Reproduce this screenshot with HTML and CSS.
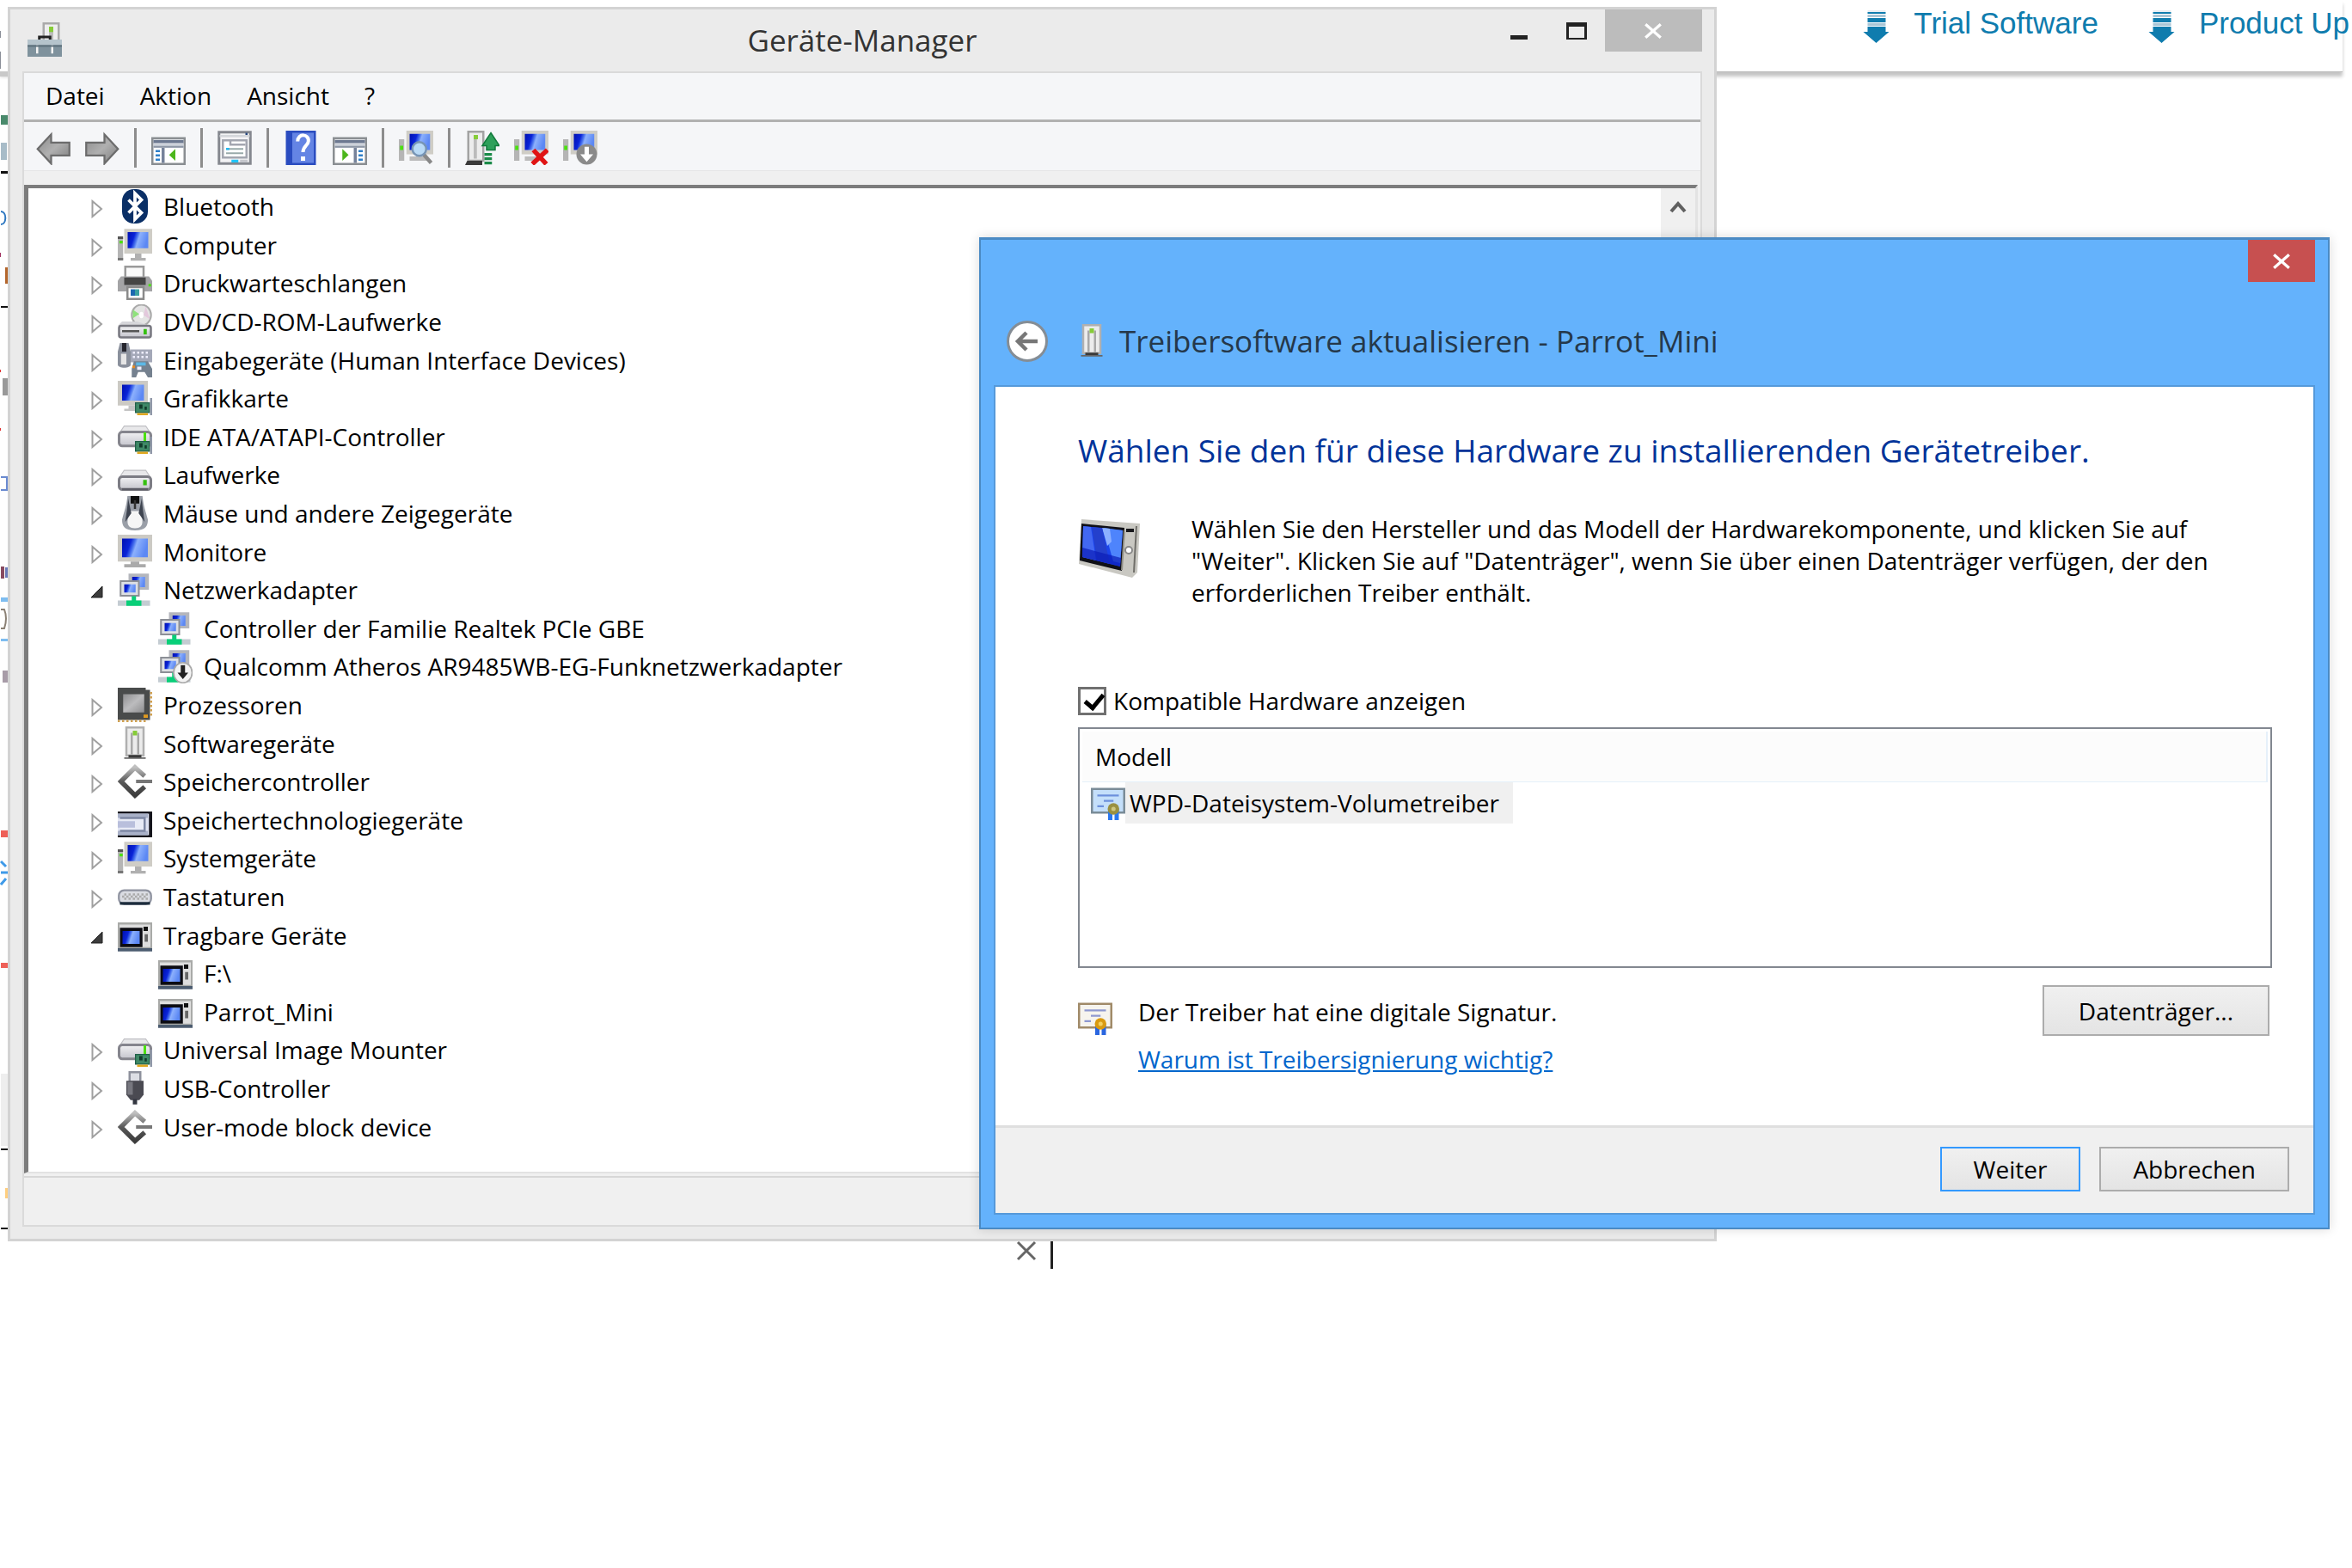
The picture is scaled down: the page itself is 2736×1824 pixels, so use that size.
FILE: index.html
```html
<!DOCTYPE html>
<html lang="de">
<head>
    <meta charset="UTF-8">
    <meta name="viewport" content="width=device-width, initial-scale=1.0">
    <title>Geräte-Manager</title>
    <link rel="stylesheet" href="styles.css">
</head>
<body>

    <!-- Shared icons -->
    <svg class="sprite" aria-hidden="true">
        <defs>
            <linearGradient id="g-screen" x1="0" y1="0" x2="1" y2=".25">
                <stop offset="0" stop-color="#0010b0"/><stop offset=".35" stop-color="#0a24d8"/>
                <stop offset=".5" stop-color="#4a74ee"/><stop offset=".6" stop-color="#8cb0fc"/><stop offset="1" stop-color="#5c88f4"/>
            </linearGradient>
            <linearGradient id="g-metal" x1="0" y1="0" x2="0" y2="1">
                <stop offset="0" stop-color="#f2f2f4"/><stop offset="1" stop-color="#c4c4cc"/>
            </linearGradient>
            <linearGradient id="g-arrow" x1="0" y1="0" x2="1" y2="1">
                <stop offset="0" stop-color="#8a8a8a"/><stop offset=".5" stop-color="#b0b0b0"/><stop offset="1" stop-color="#7c7c7c"/>
            </linearGradient>
            <linearGradient id="g-chip" x1="0" y1="0" x2="1" y2="1">
                <stop offset="0" stop-color="#8e8e90"/><stop offset=".5" stop-color="#bcbcbe"/><stop offset="1" stop-color="#8e8e90"/>
            </linearGradient>
            <linearGradient id="g-dark" x1="0" y1="0" x2="0" y2="1">
                <stop offset="0" stop-color="#c0c0c0"/><stop offset=".5" stop-color="#5a5a5a"/><stop offset="1" stop-color="#3c3c3c"/>
            </linearGradient>
        </defs>
        <symbol id="i-closed" viewBox="0 0 14 22"><path d="M1.500 2v18L12 11z" fill="#fff" stroke="#a0a0a0" stroke-width="2"/></symbol>
        <symbol id="i-open" viewBox="0 0 14 14"><path d="M13 0v13H0z" fill="#3c3c3c" stroke="#222"/></symbol>
        <symbol id="i-bluetooth" viewBox="0 0 16 16">
            <rect x="2" width="12" height="16" rx="5.500" fill="#0a2f66"/>
            <path d="M5 5l6 6-3 3V2l3 3-6 6" fill="none" stroke="#fff" stroke-width="1.500"/>
        </symbol>
        <symbol id="i-computer" viewBox="0 0 16 16">
            <path d="M0 5h2.500v10H0z" fill="#b5b5b5"/><path d="M0 4h2.500v1.200H0z" fill="#555"/><path d="M.8 6h1.500v1.300H.8z" fill="#4be010"/><path d="M0 14h2.500v1.200H0z" fill="#777"/>
            <path d="M3 .5h13v11.500H3z" fill="#cfcdc6"/><path d="M4.600 2h9.600v7.500H4.600z" fill="url(#g-screen)"/>
            <path d="M8 12h3v2h2v1.300H6V14h2z" fill="#b0b0b0"/>
        </symbol>
        <symbol id="i-monitor" viewBox="0 0 16 16">
            <path d="M0 0h16v12.500H0z" fill="#cccac4"/><path d="M2 1.800h12v8.700H2z" fill="url(#g-screen)"/>
            <path d="M6 12.500h4v1.200h3v1.500H3v-1.500h3z" fill="#aaa"/>
        </symbol>
        <symbol id="i-card" viewBox="0 0 16 16"><path d="M8 10h7v5H8z" fill="#206048"/><path d="M8.500 10.500h6v4h-6z" fill="#3f8866"/><path d="M10 11h1.500v2H10zM12.500 12h1v1.500h-1z" fill="#123a2a"/><path d="M9 15h5v1H9z" fill="#e0a820"/><path d="M15 8h1v8h-1z" fill="#9098a8"/></symbol>
        <symbol id="i-graphics" viewBox="0 0 16 16">
            <path d="M0 0h14v11.500H0z" fill="#cccac4"/><path d="M2 1.800h10.200v7.400H2z" fill="url(#g-screen)"/><path d="M5 11.500h4V14H3v-1h2z" fill="#c4c4c4"/>
            <use href="#i-card"/>
        </symbol>
        <symbol id="i-drive" viewBox="0 0 16 16">
            <path d="M3 6h10l2 3H1z" fill="#e8e8ea" stroke="#c0c0c4" stroke-width=".5"/>
            <rect x=".6" y="9" width="14.800" height="6" rx="1.500" fill="url(#g-metal)" stroke="#7c7c84" stroke-width="1.200"/><path d="M2 14.800h12" stroke="#5c5c66"/><path d="M11.800 10.500h1.700V13h-1.700z" fill="#35c010"/>
        </symbol>
        <symbol id="i-ide" viewBox="0 0 16 16">
            <path d="M3 3h10l2 3H1z" fill="#e8e8ea" stroke="#c0c0c4" stroke-width=".5"/><rect x=".6" y="5.800" width="14.800" height="6.500" rx="1.500" fill="url(#g-metal)" stroke="#85858d" stroke-width="1.200"/><path d="M12 6h1.200v4H12z" fill="#4be010"/>
            <use href="#i-card"/>
        </symbol>
        <symbol id="i-dvd" viewBox="0 0 16 16">
            <ellipse cx="11" cy="5" rx="4.500" ry="4.800" fill="#e4e4e4" stroke="#aaa" stroke-width=".8"/><path d="M7 2.500l3 2-3 2z" fill="#8fe27c"/><path d="M13 1l-1 4 3 2z" fill="#e3c8dc"/><ellipse cx="11" cy="5" rx="1" ry="1.500" fill="#fff"/>
            <path d="M2 8h7l6 2H0z" fill="#d6d6da"/><rect x=".6" y="10" width="14.800" height="5.400" rx="1" fill="url(#g-metal)" stroke="#77777f"/><path d="M2 12h8v1H2z" fill="#555"/><path d="M12 11.500h1.500V14H12z" fill="#35c010"/>
        </symbol>
        <symbol id="i-printer" viewBox="0 0 16 16">
            <path d="M3.500 .5h8.500V7H3.500z" fill="#fafafa" stroke="#9a9a9a"/><path d="M1.500 5h13l1.500 2v5H0V7z" fill="#a4a4a6"/><path d="M3 5.500h10V9H3z" fill="#454545"/>
            <path d="M14.300 8.500h1.200v1.200h-1.200z" fill="#4be010"/><path d="M4.500 10h7.500v5.500H4.500z" fill="#fff" stroke="#8a8a8a"/><path d="M6 11h2v3H6z" fill="#1c68b0"/><path d="M8 11h2v3H8z" fill="#3aa0a0"/>
        </symbol>
        <symbol id="i-hid" viewBox="0 0 16 16">
            <path d="M1 0h4l1 4v6c0 2-6 2-6 0V4z" fill="#8a909c"/><path d="M2 0h2v4H2z" fill="#26262e"/><path d="M1.500 5h2.500v5H1.500z" fill="#e6e6e6"/>
            <path d="M6 3h10v6H6z" fill="#a4a8b8"/><path d="M7 4.500h8M7 6.500h8" stroke="#eef" stroke-dasharray="1"/>
            <path d="M7.500 8.500h6.500l2 3.500v4h-2l-1.500-2.500H9.500L8.500 16H6.500v-4z" fill="#75818f"/><path d="M8.500 9h4.500v1.500H8.500z" fill="#5cb8e6"/><path d="M9 11h2v1.500H9z" fill="#eef"/><path d="M6.800 10.500h1.200v1.200H6.800z" fill="#e88a20"/>
        </symbol>
        <symbol id="i-mouse" viewBox="0 0 16 16">
            <path d="M4.500 0h7c.5 5 1.500 7 2.500 11 0 3-1 5-6 5s-6-2-6-5c1-4 2-6 2.500-11z" fill="#9a9fa8"/>
            <path d="M6 7h4c1.500 3 3 8-2 8s-3.500-5-2-8z" fill="#f6f6f6"/><path d="M4.800 1l1.500 7L3.500 12c.5-4 1-6 1.300-11zM11.200 1L9.700 8l2.800 4c-.5-4-1-6-1.300-11z" fill="#3e4450"/><path d="M6 0h4v3.500H6z" fill="#111"/><path d="M7.500 2h1v4h-1z" fill="#333"/>
        </symbol>
        <symbol id="i-network" viewBox="0 0 16 16">
            <path d="M5 .5h9.500V8H5z" fill="#b4b6bc"/><path d="M6.700 2h6v4.800h-6z" fill="url(#g-screen)"/>
            <path d="M1.300 4h8.500v6.800H1.300z" fill="#dddfe3" stroke="#8c8f96" stroke-width=".8"/><path d="M3 5.500h5.300v3.800H3z" fill="url(#g-screen)"/>
            <path d="M0 13h15v2.500H0z" fill="#c4ccd2"/><path d="M4 13h2.500v-2h2v2H11v2.500H4z" fill="#08cf78"/>
        </symbol>
        <symbol id="i-network-off" viewBox="0 0 16 16">
            <use href="#i-network"/><ellipse cx="11.500" cy="11" rx="4.300" ry="4.700" fill="#f4f4f4" stroke="#aaa" stroke-width=".7"/>
            <path d="M10.500 7.500h2V11H14l-2.500 3L9 11h1.500z" fill="#222"/>
        </symbol>
        <symbol id="i-cpu" viewBox="0 0 16 16">
            <path d="M0 0h13v1h2v14H0z" fill="#494b4b"/><path d="M2.500 3h9.800v8.500H2.500z" fill="url(#g-chip)"/>
            <path d="M0 15.500h14" stroke="#d0a050" stroke-dasharray="1"/><path d="M15.500 2v12" stroke="#d0a050" stroke-dasharray="1"/><path d="M12 12.500h2V14h-2z" fill="#e09a20"/>
        </symbol>
        <symbol id="i-device" viewBox="0 0 16 16">
            <path d="M4 .5h8v13H4z" fill="#ececec" stroke="#b0b0b0"/><path d="M6 3h4v10H6z" fill="#a8a8a8"/><path d="M7 3h2v10H7z" fill="#ececec"/>
            <path d="M7 2h2v2.200H7z" fill="#86cc38"/><path d="M5 13.300h6v1.200H5z" fill="#3a3a3a"/><path d="M3 14.400h10v.7H3z" fill="#666"/>
        </symbol>
        <symbol id="i-diamond" viewBox="0 0 16 16">
            <path d="M12.500 5.500L8 1.500 1.500 8 8 14.500l4.500-4" fill="none" stroke="url(#g-dark)" stroke-width="2.200"/><path d="M8.500 7.200H16v1.600H8.500z" fill="#777"/>
        </symbol>
        <symbol id="i-storage" viewBox="0 0 16 16">
            <path d="M0 4h16v12H0z" fill="#15151c"/><path d="M0 5h14.500v10H0z" fill="#dfe3f2"/><path d="M0 5h14v2H0zM0 13h14v2H0z" fill="#a9b1c8"/><path d="M1 7h11.500v6H1" fill="#e8ebf6" stroke="#7e88a4"/><path d="M0 8.500h8v3H0z" fill="#b9bfdc"/>
        </symbol>
        <symbol id="i-keyboard" viewBox="0 0 16 16">
            <rect x=".5" y="5" width="15" height="6.500" rx="2.500" fill="#dadce2" stroke="#8f93a0" stroke-width=".9"/><path d="M3 7h11M2 8h11M3 9h11" stroke="#aaa" stroke-dasharray="1"/><path d="M1 10.500h14v1.300H1z" fill="#1c2c3c"/>
        </symbol>
        <symbol id="i-portable" viewBox="0 0 16 16">
            <path d="M0 2h16v13H0z" fill="#a9aaa8"/><path d="M.8 3h14.400v10.500H.8z" fill="#dedede"/><path d="M1 4.500h10.500v9H1z" fill="#0c0c12"/><path d="M2.200 6h8v6h-8z" fill="url(#g-screen)"/>
            <path d="M12 4h2v2h-2z" fill="#111"/><path d="M12.500 7.500h1.500v3.500h-1.500z" fill="#666"/><path d="M0 14h16v1.500H0z" fill="#4c5c70"/>
        </symbol>
        <symbol id="i-usb" viewBox="0 0 16 16">
            <path d="M5.500 .5h5V5h-5z" fill="#dcdee4" stroke="#8e919c"/><path d="M4 4.500h8V11l-2 2.500H6L4 11z" fill="#4a4a52"/><path d="M4.500 5h2.500v6H4.500z" fill="#77777f"/><path d="M7 13h2v2.500H7z" fill="#333640"/>
        </symbol>
        <symbol id="i-cert" viewBox="0 0 16 16">
            <path d="M.5 1.500h15v11H.5z" fill="#f6f4ee" stroke="#a08a68"/><path d="M3 4.500h10M6 7h4.500M3 9.500h3" stroke="#8e98d0" stroke-width=".9"/>
            <path d="M8 11h2v5H8zM11 11h2v5h-2z" fill="#2a66e0"/><circle cx="10.500" cy="10.800" r="2.700" fill="#d99a10"/><circle cx="10.500" cy="10.800" r="1" fill="#f4d060"/>
        </symbol>
        <symbol id="i-cert-blue" viewBox="0 0 16 16">
            <path d="M.5 1.500h15v11H.5z" fill="#c4dffa" stroke="#7a8c98"/><path d="M3 4.500h10M6 7h4.500M3 9.500h3" stroke="#6c90dc" stroke-width=".9"/>
            <path d="M8 11h2v5H8zM11 11h2v5h-2z" fill="#2a78f0"/><circle cx="10.500" cy="10.800" r="2.700" fill="#9a9040"/><circle cx="10.500" cy="10.800" r="1" fill="#cfc780"/>
        </symbol>
        <symbol id="i-close" viewBox="0 0 20 16"><path d="M2 1l16 14M18 1L2 15" fill="none" stroke="currentColor" stroke-width="3"/></symbol>
        <symbol id="i-download" viewBox="0 0 30 38">
            <path d="M5 0h21v2H5z" fill="#e6edf2"/><path d="M5 2h21v2H5zM5 9h21v5H5z" fill="#0f7cae"/><path d="M5 5h21v3H5zM5 15h21v3H5z" fill="#a9c6d6"/>
            <path d="M5 19h21v6h4L15 38 0 25h5z" fill="#0f7cae"/>
        </symbol>
    </svg>

    <!-- Web page behind the windows -->
    <header class="site-bar">
        <a class="site-link" href="#"><svg class="site-icon"><use href="#i-download"/></svg>Trial Software</a>
        <a class="site-link" href="#"><svg class="site-icon"><use href="#i-download"/></svg>Product Up</a>
    </header>
    <svg class="page-edge" viewBox="0 0 9 1500" aria-hidden="true">
        <path d="M0 36h1v8H0zM0 60h1v20H0z" fill="#8a8f98"/>
        <path d="M0 83h9v6H0z" fill="#c9c9c9"/><path d="M1 134h8v11H1z" fill="#4a8a6c"/><path d="M1 166h7v20H1z" fill="#a8bcc8"/>
        <path d="M1 199h8v3H1zM1 356h8v2H1zM1 1336h8v2H1zM1 1428h8v2H1z" fill="#111"/>
        <path d="M1 246c7 0 7 15 0 15" fill="none" stroke="#2c76c0" stroke-width="2"/>
        <path d="M6 311h3v19H6z" fill="#b4662c"/><path d="M0 294h1v5H0z" fill="#a03060"/><path d="M0 430h1v3H0zM0 498h1v3H0z" fill="#e03030"/>
        <path d="M3 440h6v20H3z" fill="#999"/><path d="M1 555h7v15H1" fill="none" stroke="#6a8ad0" stroke-width="2"/>
        <path d="M1 659h4v14H1z" fill="#884a60"/><path d="M6 660h3v12H6z" fill="#6a7ab8"/><path d="M1 695h8v5H1zM1 743h8v3H1z" fill="#7ebdf0"/>
        <path d="M1 709h4q4 10 0 22H1" fill="none" stroke="#8a8074" stroke-width="2"/><path d="M3 780h6v14H3z" fill="#a89ca8"/>
        <path d="M1 966h8v8H1zM1 1120h8v6H1z" fill="#ee6058"/>
        <path d="M1 1002l6 6M1 1015h8M1 1029l6-7" stroke="#3f9ae8" stroke-width="3"/>
        <path d="M1 1249h8v84H1z" fill="#eee"/><path d="M6 1382h3v12H6z" fill="#ffcf80"/>
    </svg>
    <div class="tab-rest">
        <svg class="tab-close" viewBox="0 0 24 24"><path d="M2 1l20 20M22 1L2 21" stroke="#666" stroke-width="3"/></svg>
        <span class="caret"></span>
    </div>

    <!-- Device manager -->
    <main class="window manager">
        <div class="titlebar">
            <svg class="icon title-icon" viewBox="0 0 16 16">
                <path d="M7.500.5h7V10h-7z" fill="#eee" stroke="#aaa"/><path d="M10 3h2v6h-2z" fill="#bbb"/><path d="M10 2h2v2.500h-2z" fill="#86cc38"/>
                <path d="M5.500 8V6.800h5V8" fill="none" stroke="#222" stroke-width="1.200"/><path d="M0 8h16v8H0z" fill="#7f929d"/><path d="M0 8h16v2.500H0z" fill="#b5c4cc"/>
                <path d="M4.500 10.500v4M11.500 10.500v4" stroke="#f4f4f4"/><path d="M0 11h16" stroke="#5e717c" stroke-width=".8"/>
            </svg>
            <h1 class="title">Geräte-Manager</h1>
            <div class="controls">
                <button class="control" aria-label="Minimieren"><svg class="glyph" viewBox="0 0 24 20"><path d="M1 15h20v5H1z" fill="#222"/></svg></button>
                <button class="control" aria-label="Maximieren"><svg class="glyph" viewBox="0 0 24 20"><path d="M0 0h24v20H0zM3 5v13h18V5z" fill="#222" fill-rule="evenodd"/></svg></button>
                <button class="control close" aria-label="Schließen"><svg class="glyph-x"><use href="#i-close"/></svg></button>
            </div>
        </div>
        <div class="frame">
            <nav class="menubar">
                <button class="menu">Datei</button>
                <button class="menu">Aktion</button>
                <button class="menu">Ansicht</button>
                <button class="menu">?</button>
            </nav>
            <div class="toolbar">
                <button class="tool" aria-label="Zurück"><svg class="icon" viewBox="0 0 16 16"><path d="M.7 8.500L7 1.700V5.500h8.500v6H7v3.800z" fill="url(#g-arrow)" stroke="#6c6c6c" stroke-width=".9"/></svg></button>
                <button class="tool" aria-label="Vorwärts"><svg class="icon" viewBox="0 0 16 16"><path d="M15.300 8.500L9 1.700V5.500H.5v6H9v3.800z" fill="url(#g-arrow)" stroke="#6c6c6c" stroke-width=".9"/></svg></button>
                <span class="sep"></span>
                <button class="tool" aria-label="Konsolenstruktur"><svg class="icon" viewBox="0 0 16 16"><path d="M.5 3.500h15v12H.5z" fill="#fff" stroke="#8a8e92"/><path d="M1 4.300h14v1.500H1z" fill="#6c7890"/><path d="M1 6h14v2H1z" fill="#cdd2da"/><path d="M1 7.500h14" stroke="#8d96a6" stroke-width=".8"/><path d="M5.500 8v7" stroke="#76829a" stroke-width="1.400"/><path d="M2 9.500h2M2 11.500h2M2 13.500h2" stroke="#2f7fc8"/><path d="M11.200 8.500v5.500L8.300 11.300z" fill="#4cb61c"/></svg></button>
                <span class="sep"></span>
                <button class="tool" aria-label="Eigenschaften"><svg class="icon" viewBox="0 0 16 16"><path d="M.7.7h14.600v14.600H.7z" fill="#f3f3f5" stroke="#85888f" stroke-width="1.200"/><path d="M1 2h14v1H1z" fill="#d4d6da"/><path d="M13 1h1v1h-1z" fill="#2a4a80"/><path d="M2.500 4.500h11v8h-11z" fill="#fff" stroke="#a3a6b0"/><path d="M6 4.500v2h7" fill="none" stroke="#a3a6b0"/><path d="M4 8.500h8M4 10.500h8" stroke="#9aa" stroke-width=".8"/><path d="M4 8.500h1.500" stroke="#20b8f0"/><path d="M6.500 13.500h3.200v1.300H6.500z" fill="#20c4f8"/><path d="M10.500 13.500h3.500v1.300h-3.500z" fill="#c4c6cc"/></svg></button>
                <span class="sep"></span>
                <button class="tool" aria-label="Hilfe"><svg class="icon" viewBox="0 0 16 16"><path d="M1 0h14v16H1z" fill="#2a4cc0"/><path d="M4 1h10v14H4z" fill="#6484e4"/><path d="M6.500 5c0-4 5.500-3.600 5 0-.3 2-2.500 2.200-2.500 5" fill="none" stroke="#fff" stroke-width="1.600"/><path d="M8 12h2v2H8z" fill="#fff"/></svg></button>
                <button class="tool" aria-label="Aktionsbereich"><svg class="icon" viewBox="0 0 16 16"><path d="M.5 3.500h15v12H.5z" fill="#fff" stroke="#8a8e92"/><path d="M1 4.300h14v1.500H1z" fill="#6c7890"/><path d="M1 6h14v2H1z" fill="#cdd2da"/><path d="M1 7.500h14" stroke="#8d96a6" stroke-width=".8"/><path d="M10.500 8v7" stroke="#76829a" stroke-width="1.400"/><path d="M12 9.500h2M12 11.500h2M12 13.500h2" stroke="#2f7fc8"/><path d="M4.500 8.500v5.500l2.900-2.700z" fill="#4cb61c"/></svg></button>
                <span class="sep"></span>
                <button class="tool" aria-label="Nach geänderter Hardware suchen"><svg class="icon" viewBox="0 0 16 16"><path d="M0 4h2.500v10H0z" fill="#b5b5b5"/><path d="M.5 7H2v2H.5z" fill="#4be010"/><path d="M3.500 0H16v11H3.500z" fill="#cfcdc6"/><path d="M5 1.500h9.500V9H5z" fill="url(#g-screen)"/><path d="M5 12h8v2H5z" fill="#bbb"/><path d="M11.500 11l3.500 4" stroke="#888" stroke-width="1.800"/><circle cx="9.500" cy="8.500" r="3.200" fill="#b9daf6" stroke="#7795b5"/></svg></button>
                <span class="sep"></span>
                <button class="tool" aria-label="Treiber aktualisieren"><svg class="icon" viewBox="0 0 16 16"><path d="M1.500.5h7V14h-7z" fill="#ececec" stroke="#a3a3a3"/><path d="M4 3h1.500v10H4z" fill="#bbb"/><path d="M4 2h2v2H4z" fill="#86cc38"/><path d="M1 14h7v2H0z" fill="#3a3a3a"/><path d="M12 1l4 6h-2v2h-4V7H8z" fill="#2ea05a" stroke="#117a3c" stroke-width=".6"/><path d="M9 11h3.500M9 13h3.500M9 15h3.500" stroke="#1a8a48" stroke-width="1.300"/></svg></button>
                <button class="tool" aria-label="Deinstallieren"><svg class="icon" viewBox="0 0 16 16"><path d="M0 4h2.500v10H0z" fill="#b5b5b5"/><path d="M.5 7H2v2H.5z" fill="#4be010"/><path d="M3.500 0H16v11H3.500z" fill="#cfcdc6"/><path d="M5 1.500h9.500V9H5z" fill="url(#g-screen)"/><path d="M5 12h8v2H5z" fill="#bbb"/><path d="M9 9l6 6.500M15.500 9L8.500 15.500" stroke="#e01414" stroke-width="2.200"/></svg></button>
                <button class="tool" aria-label="Deaktivieren"><svg class="icon" viewBox="0 0 16 16"><path d="M0 4h2.500v10H0z" fill="#b5b5b5"/><path d="M.5 7H2v2H.5z" fill="#4be010"/><path d="M3.500 0H16v11H3.500z" fill="#cfcdc6"/><path d="M5 1.500h9.500V9H5z" fill="url(#g-screen)"/><circle cx="11" cy="11" r="4.800" fill="#8a8a8a"/><path d="M10 7.500h2V11h2l-3 3.500L8 11h2z" fill="#fff"/></svg></button>
            </div>
            <div class="panel">
                <ul class="tree">
                    <li class="node"><svg class="twist"><use href="#i-closed"/></svg><svg class="icon"><use href="#i-bluetooth"/></svg>Bluetooth</li>
                    <li class="node"><svg class="twist"><use href="#i-closed"/></svg><svg class="icon"><use href="#i-computer"/></svg>Computer</li>
                    <li class="node"><svg class="twist"><use href="#i-closed"/></svg><svg class="icon"><use href="#i-printer"/></svg>Druckwarteschlangen</li>
                    <li class="node"><svg class="twist"><use href="#i-closed"/></svg><svg class="icon"><use href="#i-dvd"/></svg>DVD/CD-ROM-Laufwerke</li>
                    <li class="node"><svg class="twist"><use href="#i-closed"/></svg><svg class="icon"><use href="#i-hid"/></svg>Eingabegeräte (Human Interface Devices)</li>
                    <li class="node"><svg class="twist"><use href="#i-closed"/></svg><svg class="icon"><use href="#i-graphics"/></svg>Grafikkarte</li>
                    <li class="node"><svg class="twist"><use href="#i-closed"/></svg><svg class="icon"><use href="#i-ide"/></svg>IDE ATA/ATAPI-Controller</li>
                    <li class="node"><svg class="twist"><use href="#i-closed"/></svg><svg class="icon"><use href="#i-drive"/></svg>Laufwerke</li>
                    <li class="node"><svg class="twist"><use href="#i-closed"/></svg><svg class="icon"><use href="#i-mouse"/></svg>Mäuse und andere Zeigegeräte</li>
                    <li class="node"><svg class="twist"><use href="#i-closed"/></svg><svg class="icon"><use href="#i-monitor"/></svg>Monitore</li>
                    <li class="node"><svg class="twist open"><use href="#i-open"/></svg><svg class="icon"><use href="#i-network"/></svg>Netzwerkadapter</li>
                    <li class="node child"><svg class="icon"><use href="#i-network"/></svg>Controller der Familie Realtek PCIe GBE</li>
                    <li class="node child"><svg class="icon"><use href="#i-network-off"/></svg>Qualcomm Atheros AR9485WB-EG-Funknetzwerkadapter</li>
                    <li class="node"><svg class="twist"><use href="#i-closed"/></svg><svg class="icon"><use href="#i-cpu"/></svg>Prozessoren</li>
                    <li class="node"><svg class="twist"><use href="#i-closed"/></svg><svg class="icon"><use href="#i-device"/></svg>Softwaregeräte</li>
                    <li class="node"><svg class="twist"><use href="#i-closed"/></svg><svg class="icon"><use href="#i-diamond"/></svg>Speichercontroller</li>
                    <li class="node"><svg class="twist"><use href="#i-closed"/></svg><svg class="icon"><use href="#i-storage"/></svg>Speichertechnologiegeräte</li>
                    <li class="node"><svg class="twist"><use href="#i-closed"/></svg><svg class="icon"><use href="#i-computer"/></svg>Systemgeräte</li>
                    <li class="node"><svg class="twist"><use href="#i-closed"/></svg><svg class="icon"><use href="#i-keyboard"/></svg>Tastaturen</li>
                    <li class="node"><svg class="twist open"><use href="#i-open"/></svg><svg class="icon"><use href="#i-portable"/></svg>Tragbare Geräte</li>
                    <li class="node child"><svg class="icon"><use href="#i-portable"/></svg>F:\</li>
                    <li class="node child"><svg class="icon"><use href="#i-portable"/></svg>Parrot_Mini</li>
                    <li class="node"><svg class="twist"><use href="#i-closed"/></svg><svg class="icon"><use href="#i-ide"/></svg>Universal Image Mounter</li>
                    <li class="node"><svg class="twist"><use href="#i-closed"/></svg><svg class="icon"><use href="#i-usb"/></svg>USB-Controller</li>
                    <li class="node"><svg class="twist"><use href="#i-closed"/></svg><svg class="icon"><use href="#i-diamond"/></svg>User-mode block device</li>
                </ul>
                <div class="scrollbar">
                    <button class="scroll-up" aria-label="Nach oben"><svg class="chevron" viewBox="0 0 20 16"><path d="M2 13l8-9 8 9" fill="none" stroke="#606060" stroke-width="4"/></svg></button>
                </div>
            </div>
            <div class="statusbar"></div>
        </div>
    </main>

    <!-- Driver update wizard -->
    <section class="window wizard">
        <div class="wizard-top">
            <button class="control close" aria-label="Schließen"><svg class="glyph-x"><use href="#i-close"/></svg></button>
        </div>
        <div class="wizard-title">
            <button class="back" aria-label="Zurück"><svg class="back-arrow" viewBox="0 0 28 24"><path d="M26 12H4M13 2L3 12l10 10" fill="none" stroke="#777" stroke-width="4.500"/></svg></button>
            <svg class="icon"><use href="#i-device"/></svg>
            <h2 class="title">Treibersoftware aktualisieren - Parrot_Mini</h2>
        </div>
        <div class="wizard-page">
            <div class="wizard-body">
                <h3 class="headline">Wählen Sie den für diese Hardware zu installierenden Gerätetreiber.</h3>
                <div class="intro">
                    <svg class="intro-icon" viewBox="0 0 74 70">
                        <path d="M4 1l68 5-3 57-6 6L1 53z" fill="#c9c8c2"/><path d="M4 6l50 5-3 50L2 49z" fill="#101016"/>
                        <path d="M6 9l46 5-3 42L5 45z" fill="#1c44ea"/><path d="M6 9l9 1 6 39-16-4z" fill="#4268f2"/><path d="M30 11l22 3-3 38-8-2z" fill="#4e84fc"/><path d="M28 11l9 1 2 15-5 5z" fill="#8cb0ff"/>
                        <path d="M16 10l12 1 9 42-15-4z" fill="#2440cc"/><path d="M5 34l45 12-1 10L5 45z" fill="#0c1cb8" opacity=".7"/>
                        <path d="M56 12h9v4h-9z" fill="#16161a"/><path d="M54 14l-3 46" stroke="#8f8e86" stroke-width="2"/><circle cx="59" cy="37" r="4" fill="#fff" stroke="#888" stroke-width="2"/>
                        <path d="M68 9l-3 54" fill="none" stroke="#6f6e69" stroke-width="2"/>
                    </svg>
                    <p class="intro-text">Wählen Sie den Hersteller und das Modell der Hardwarekomponente, und klicken Sie auf<br>"Weiter". Klicken Sie auf "Datenträger", wenn Sie über einen Datenträger verfügen, der den<br>erforderlichen Treiber enthält.</p>
                </div>
                <label class="compat"><input class="tick" type="checkbox" checked>Kompatible Hardware anzeigen</label>
                <div class="models">
                    <table class="model-table">
                        <thead><tr><th class="model-head">Modell</th></tr></thead>
                        <tbody><tr><td class="model-cell"><span class="model"><svg class="icon"><use href="#i-cert-blue"/></svg><span class="model-name">WPD-Dateisystem-Volumetreiber</span></span></td></tr></tbody>
                    </table>
                </div>
                <div class="signature">
                    <svg class="icon"><use href="#i-cert"/></svg>
                    <div class="signature-text">
                        <p class="signed">Der Treiber hat eine digitale Signatur.</p>
                        <a class="why" href="#">Warum ist Treibersignierung wichtig?</a>
                    </div>
                    <button class="btn disk">Datenträger...</button>
                </div>
            </div>
            <div class="wizard-footer">
                <button class="btn primary">Weiter</button>
                <button class="btn">Abbrechen</button>
            </div>
        </div>
    </section>

</body>
</html>
```

FILE: styles.css
```css
:root {
    --ui-font: "Open Sans", "Noto Sans", sans-serif;
    --chrome: #ebebeb;
    --face: #f0f0f0;
    --sky: #64b2fc;
}

* { box-sizing: border-box; }

body {
    margin: 0;
    min-height: 100vh;
    position: relative;
    overflow: hidden;
    background: #fff;
    color: #000;
    font: 28px/36px var(--ui-font);
}

h1, h2, h3, p, ul { margin: 0; padding: 0; font-weight: 400; }
button { font: inherit; color: inherit; margin: 0; padding: 0; border: 0; background: none; }
svg { display: block; flex: none; }

.sprite { position: absolute; width: 0; height: 0; }
.icon { width: 40px; height: 40px; }

/* --- Page behind --- */
.site-bar {
    display: flex;
    justify-content: flex-end;
    gap: 58px;
    height: 84px;
    margin-right: 11px;
    border-bottom: 1px solid #bbb;
    box-shadow: 0 5px 4px #c4c4c4;
    background: #fff;
    font: 35px/40px "Liberation Sans", Arial, sans-serif;
}
.site-link {
    display: flex;
    align-items: flex-start;
    gap: 28px;
    padding-top: 7px;
    color: #0f7cae;
    text-decoration: none;
    white-space: nowrap;
}
.site-link:last-child { margin-right: -8px; }
.site-icon { width: 31px; height: 38px; margin-top: 5px; }
.page-edge { position: absolute; left: 0; top: 0; width: 9px; height: 1500px; }
.tab-rest { position: absolute; left: 1182px; top: 1443px; display: flex; gap: 16px; }
.tab-close { width: 24px; height: 26px; }
.caret { width: 3px; height: 33px; background: #222; }

/* --- Windows --- */
.window { position: absolute; display: flex; flex-direction: column; }
.manager {
    left: 9px; top: 8px; right: 739px; bottom: 380px;
    border: 3px solid #d3d3d3;
    background: var(--chrome);
    padding: 0 14px 14px;
}
.titlebar { display: flex; justify-content: space-between; height: 72px; }
.title-icon { margin: 15px 199px 0 6px; }
.title {
    font-size: 35px;
    line-height: 72px;
    color: #333;
    white-space: nowrap;
}
.controls { display: flex; align-items: flex-start; }
.control { display: flex; align-items: center; justify-content: center; width: 66px; height: 49px; }
.glyph { width: 24px; height: 20px; }
.glyph-x { width: 22px; height: 18px; }
.manager .close { width: 113px; background: #bcbcbc; color: #fff; }

.frame {
    flex: 1;
    min-height: 0;
    display: flex;
    flex-direction: column;
    border: 2px solid #dadada;
    background: var(--face);
}
.menubar {
    display: flex;
    gap: 41px;
    height: 57px;
    padding: 0 25px 3px;
    background: #f5f6f8;
    border-bottom: 3px solid #b1b1b1;
}
.toolbar {
    display: flex;
    align-items: center;
    gap: 17px;
    height: 57px;
    padding: 3px 0 0 14px;
    background: #f5f6f8;
    border-bottom: 1px solid #e6e6e6;
    margin-bottom: 16px;
}
.sep { width: 3px; height: 46px; background: #8d8d8d; }

.panel {
    flex: 1;
    min-height: 0;
    display: flex;
    margin-right: 3px;
    background: #fff;
    border: solid;
    border-width: 4px 3px 2px 5px;
    border-color: #7c7c7c #e3e3e3 #e3e3e3 #7c7c7c;
}
.tree {
    flex: 1;
    display: flex;
    flex-direction: column;
    padding: 0 0 29px 73px;
    list-style: none;
}
.node {
    flex: 1;
    display: flex;
    align-items: center;
    gap: 13px;
    padding-bottom: 2px;
    white-space: nowrap;
}
.node.child { padding-left: 78px; }
.twist { width: 14px; height: 22px; margin: 6px 4px 0 0; }
.twist.open { height: 14px; }
.scrollbar { width: 40px; background: var(--face); }
.scroll-up { display: flex; width: 40px; height: 44px; align-items: center; justify-content: center; }
.chevron { width: 20px; height: 16px; }
.statusbar { height: 57px; margin-top: 3px; border-top: 2px solid #d7d7d7; }

/* --- Wizard --- */
.wizard {
    left: 1139px; top: 276px; right: 26px;
    border: 2px solid #4a8ac4;
    border-top-width: 3px;
    background: var(--sky);
    padding: 0 15px 15px;
    box-shadow: 0 0 12px rgba(0, 0, 0, .15);
}
.wizard-top { display: flex; justify-content: flex-end; height: 72px; }
.wizard-top .close { width: 78px; background: #c75050; color: #fff; }
.wizard-title { display: flex; align-items: center; height: 97px; padding: 0 0 5px 15px; }
.wizard-title .icon { margin: 0 12px 0 31px; }
.wizard-title .title { color: #25384a; }
.back {
    display: flex;
    align-items: center;
    justify-content: center;
    width: 48px;
    height: 48px;
    border: 3px solid #858d95;
    border-radius: 50%;
    background: #fff;
}
.back-arrow { width: 28px; height: 24px; }

.wizard-page { border: 2px solid #5599da; background: #fff; }
.wizard-body { padding: 46px 48px 0 96px; }
.headline { font-size: 37px; line-height: 56px; color: #003399; white-space: nowrap; }
.intro { display: flex; gap: 58px; padding-top: 45px; }
.intro-icon { width: 74px; height: 70px; margin-top: 6px; }
.intro-text { line-height: 37px; white-space: nowrap; }
.compat { display: flex; align-items: center; gap: 8px; margin-top: 89px; }
.tick {
    appearance: none;
    width: 33px;
    height: 33px;
    margin: 0;
    border: 3px solid #707070;
    background: #fff;
}
.tick:checked::after {
    content: "";
    display: block;
    width: 9px;
    height: 17px;
    margin: 1px 0 0 9px;
    border: solid #000;
    border-width: 0 5px 5px 0;
    transform: rotate(40deg);
}
.models { height: 280px; margin-top: 13px; border: 2px solid #828790; padding: 3px; }
.model-table { width: 100%; border-collapse: collapse; }
.model-head {
    height: 58px;
    padding: 0 15px;
    font-weight: 400;
    text-align: left;
    background: #fcfcfc;
    border-right: 2px solid #e5f0fa;
    border-bottom: 1px solid #e5f0fa;
}
.model-cell { padding: 0 10px; }
.model { display: flex; align-items: center; }
.model-name { padding: 0 16px 0 5px; line-height: 48px; background: var(--face); }

.signature { display: flex; align-items: flex-start; margin-top: 20px; }
.signature > .icon { margin: 18px 30px 0 0; }
.signature-text { flex: 1; padding-top: 13px; }
.why { display: inline-block; margin-top: 19px; color: #0066cc; }
.btn {
    height: 52px;
    padding: 0 37px;
    border: 2px solid #acacac;
    background: linear-gradient(#f0f0f0, #e4e4e4);
}
.btn.disk { height: 59px; padding: 0 40px; margin-right: 3px; }
.btn.primary { border-color: #3399ff; }
.wizard-footer {
    display: flex;
    justify-content: flex-end;
    gap: 22px;
    margin-top: 59px;
    padding: 22px 28px 25px;
    border-top: 3px solid #dfdfdf;
    background: var(--face);
}
```
